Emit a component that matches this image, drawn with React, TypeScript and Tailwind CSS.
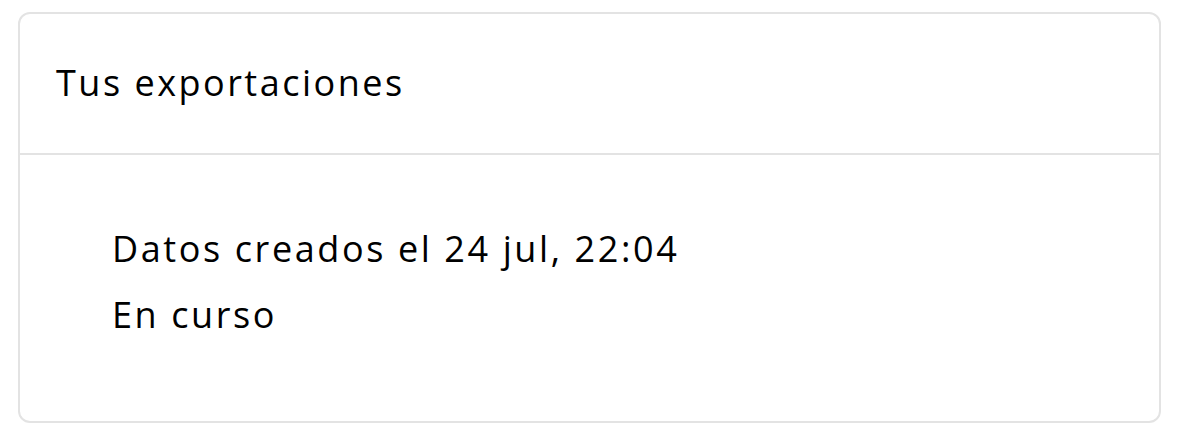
export default function App() {
  return (
    <div className="w-[1179px] h-[435px] bg-white pt-[12px] px-[18px] font-['Open_Sans',sans-serif] text-black">
      <div className="h-[411px] rounded-[12px] border-2 border-[#e3e3e3] flex flex-col overflow-hidden">
        <div className="h-[141px] flex items-center pl-[36px] pb-[2px] border-b-2 border-[#e3e3e3] shrink-0">
          <span className="text-[36px] leading-none tracking-[2.5px]">Tus exportaciones</span>
        </div>
        <div className="flex-1 flex flex-col justify-center pl-[92px] pb-[12px]">
          <div className="text-[36px] leading-[66px] tracking-[2.6px]">Datos creados el 24 jul, 22:04</div>
          <div className="text-[36px] leading-[66px] tracking-[2.6px]">En curso</div>
        </div>
      </div>
    </div>
  );
}
